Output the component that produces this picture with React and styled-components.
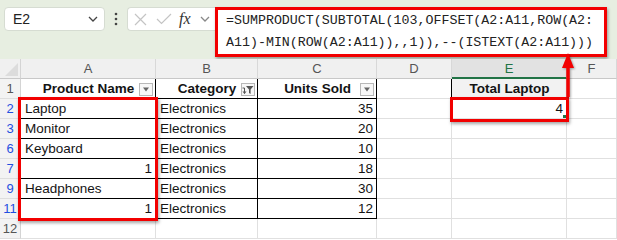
import React from "react";
import styled, { createGlobalStyle, css } from "styled-components";

const GlobalStyle = createGlobalStyle`
  html, body { margin: 0; padding: 0; background: #ffffff; }
  body { font-family: "Liberation Sans", Arial, sans-serif; }
  * { box-sizing: border-box; }
`;

const RED = "#f20000";

const Page = styled.div`
  position: relative;
  width: 617px;
  height: 240px;
  overflow: hidden;
`;

const Toolbar = styled.div`
  display: flex;
  align-items: flex-start;
  height: 59px;
  padding: 7px 0 0 4px;
  background: #e7eee1;
`;

const NameBox = styled.div`
  width: 101px;
  height: 24px;
  display: flex;
  align-items: center;
  justify-content: space-between;
  padding: 0 6px 0 8px;
  background: #ffffff;
  border: 1px solid #d6dcd2;
  border-radius: 4px;
  font-size: 14px;
  color: #222;
`;

const Dots = styled.div`
  width: 22px;
  height: 24px;
  display: flex;
  align-items: center;
  justify-content: center;
`;

const FxBox = styled.div`
  width: 88px;
  height: 24px;
  display: flex;
  align-items: center;
  gap: 9px;
  padding-left: 6px;
  background: #ffffff;
  border: 1px solid #d6dcd2;
  border-right: none;
  border-radius: 4px 0 0 4px;
`;

const FxLabel = styled.span`
  font-family: "Liberation Serif", "Times New Roman", serif;
  font-style: italic;
  font-size: 16px;
  color: #333;
  margin-left: -2px;
`;

const FormulaBox = styled.div`
  width: 392px;
  height: 50px;
  background: #ffffff;
  border: 3px solid ${RED};
  box-shadow: 1px 2px 3px rgba(0, 0, 0, 0.35);
  padding: 0 0 0 8px;
  font-family: "Liberation Mono", "Courier New", monospace;
  font-size: 13.3px;
  line-height: 22px;
  color: #222;
  white-space: pre;
`;

const FormulaLine = styled.div``;

const Grid = styled.div`
  position: relative;
  display: grid;
  grid-template-columns: 21px 135px 102px 119px 75px 115px 50px;
  grid-auto-rows: 20px;
`;

const Corner = styled.div`
  position: relative;
  background: #f0f0f0;
  border-right: 1px solid #d4d4d4;
  border-bottom: 1px solid #c8c8c8;
  &::after {
    content: "";
    position: absolute;
    right: 2px;
    bottom: 2px;
    border-left: 13px solid transparent;
    border-bottom: 13px solid #dcdcdc;
  }
`;

const ColHead = styled.div`
  display: flex;
  align-items: center;
  justify-content: center;
  background: #f0f0f0;
  color: #555;
  font-size: 13px;
  border-right: 1px solid #d8d8d8;
  border-bottom: 1px solid #c8c8c8;
  ${(p) =>
    p.$active &&
    css`
      background: #e2e2e2;
      color: #217346;
      border-bottom: 2px solid #217346;
    `}
`;

const RowHead = styled.div`
  display: flex;
  align-items: center;
  justify-content: center;
  background: #f3f3f3;
  color: ${(p) => (p.$filtered ? "#1f4fe0" : "#555")};
  font-size: 13px;
  border-right: 1px solid #d4d4d4;
  border-bottom: 1px solid #dedede;
`;

const Cell = styled.div`
  position: relative;
  display: flex;
  align-items: center;
  justify-content: ${(p) =>
    p.$align === "right" ? "flex-end" : p.$align === "center" ? "center" : "flex-start"};
  padding: 0 3px 0 4px;
  font-size: 13.5px;
  color: #141414;
  font-weight: ${(p) => (p.$bold ? 700 : 400)};
  background: ${(p) => p.$bg || "#ffffff"};
  border-right: 1px solid ${(p) => (p.$br ? "#000000" : "#e0e0e0")};
  border-bottom: 1px solid ${(p) => (p.$bb ? "#000000" : "#e0e0e0")};
  white-space: nowrap;
  overflow: hidden;
`;

const FilterBtn = styled.span`
  position: absolute;
  right: 2px;
  top: 4px;
  width: 14px;
  height: 13px;
  display: flex;
  align-items: center;
  justify-content: center;
  background: #f7f7f7;
  border: 1px solid #b8b8b8;
`;

const FillHandle = styled.span`
  position: absolute;
  right: -1px;
  bottom: -1px;
  width: 5px;
  height: 5px;
  background: #217346;
  border: 1px solid #fff;
`;

const Highlight = styled.div`
  position: absolute;
  left: ${(p) => p.$x}px;
  top: ${(p) => p.$y}px;
  width: ${(p) => p.$w}px;
  height: ${(p) => p.$h}px;
  border: 3px solid ${RED};
  box-shadow: 1px 2px 3px rgba(0, 0, 0, 0.35);
  pointer-events: none;
`;

const ArrowSvg = styled.svg`
  position: absolute;
  left: 559px;
  top: 50px;
  overflow: visible;
  filter: drop-shadow(1px 1px 1px rgba(0, 0, 0, 0.35));
`;

const Chevron = ({ color = "#444" }) => (
  <svg width="10" height="6" viewBox="0 0 10 6">
    <path d="M1 1 L5 5 L9 1" fill="none" stroke={color} strokeWidth="1.3" />
  </svg>
);

const DownTri = () => (
  <svg width="8" height="5" viewBox="0 0 8 5">
    <path d="M1 0.5 L7 0.5 L4 4.5 Z" fill="#666" />
  </svg>
);

const FunnelIcon = () => (
  <svg width="12" height="10" viewBox="0 0 12 10">
    <path d="M0.5 3 L2.5 3 L2.5 8.5" fill="none" stroke="#555" strokeWidth="1" />
    <path d="M0.5 6.5 L2.5 9 L4.5 6.5" fill="#555" />
    <path d="M4 1 L11.5 1 L8.6 4.6 L8.6 9 L7 8 L7 4.6 Z" fill="#555" />
  </svg>
);

const columns = ["A", "B", "C", "D", "E", "F"];

const rows = [
  {
    n: 2,
    cells: [{ t: "Laptop" }, { t: "Electronics" }, { t: "35", r: true }, {}, { t: "4", r: true, sel: true }, {}],
  },
  { n: 3, cells: [{ t: "Monitor" }, { t: "Electronics" }, { t: "20", r: true }, {}, {}, {}] },
  { n: 6, cells: [{ t: "Keyboard" }, { t: "Electronics" }, { t: "10", r: true }, {}, {}, {}] },
  { n: 7, cells: [{ t: "1", r: true }, { t: "Electronics" }, { t: "18", r: true }, {}, {}, {}] },
  { n: 9, cells: [{ t: "Headphones" }, { t: "Electronics" }, { t: "30", r: true }, {}, {}, {}] },
  { n: 11, cells: [{ t: "1", r: true }, { t: "Electronics" }, { t: "12", r: true }, {}, {}, {}] },
];

export default function App() {
  return (
    <Page>
      <GlobalStyle />
      <Toolbar>
        <NameBox>
          <span>E2</span>
          <Chevron />
        </NameBox>
        <Dots>
          <svg width="4" height="14" viewBox="0 0 4 14">
            <circle cx="2" cy="2" r="1.3" fill="#444" />
            <circle cx="2" cy="7" r="1.3" fill="#444" />
            <circle cx="2" cy="12" r="1.3" fill="#444" />
          </svg>
        </Dots>
        <FxBox>
          <svg width="13" height="13" viewBox="0 0 13 13">
            <path d="M1 1 L12 12 M12 1 L1 12" stroke="#c4c4c4" strokeWidth="1.2" />
          </svg>
          <svg width="16" height="12" viewBox="0 0 16 12">
            <path d="M1 6 L5.5 10.5 L15 1" fill="none" stroke="#c4c4c4" strokeWidth="1.2" />
          </svg>
          <FxLabel>fx</FxLabel>
          <Chevron color="#888" />
        </FxBox>
        <FormulaBox>
          <FormulaLine>=SUMPRODUCT(SUBTOTAL(103,OFFSET(A2:A11,ROW(A2:</FormulaLine>
          <FormulaLine>A11)-MIN(ROW(A2:A11)),,1)),--(ISTEXT(A2:A11)))</FormulaLine>
        </FormulaBox>
      </Toolbar>

      <Grid>
        <Corner />
        {columns.map((c) => (
          <ColHead key={c} $active={c === "E"}>
            {c}
          </ColHead>
        ))}

        <RowHead>1</RowHead>
        <Cell $align="center" $bold $br $bb>
          Product Name
          <FilterBtn>
            <DownTri />
          </FilterBtn>
        </Cell>
        <Cell $align="center" $bold $br $bb>
          Category
          <FilterBtn>
            <FunnelIcon />
          </FilterBtn>
        </Cell>
        <Cell $align="center" $bold $br $bb>
          Units Sold
          <FilterBtn>
            <DownTri />
          </FilterBtn>
        </Cell>
        <Cell $br />
        <Cell $align="center" $bold $bg="#f2f2f2">
          Total Laptop
        </Cell>
        <Cell />

        {rows.map((row) => (
          <React.Fragment key={row.n}>
            <RowHead $filtered>{row.n}</RowHead>
            {row.cells.map((c, i) => (
              <Cell key={i} $align={c.r ? "right" : "left"} $br={i < 3} $bb={i < 3}>
                {c.t}
                {c.sel && <FillHandle />}
              </Cell>
            ))}
          </React.Fragment>
        ))}

        <RowHead>12</RowHead>
        {columns.map((c) => (
          <Cell key={c} />
        ))}

        <Highlight $x={18} $y={38} $w={140} $h={124} />
        <Highlight $x={450} $y={38} $w={119} $h={25} />
      </Grid>

      <ArrowSvg width="18" height="50" viewBox="0 0 18 50">
        <path d="M9 47 L9 16" stroke={RED} strokeWidth="3.5" />
        <path d="M3 18 L15 18 L9 3 Z" fill={RED} />
      </ArrowSvg>
    </Page>
  );
}
